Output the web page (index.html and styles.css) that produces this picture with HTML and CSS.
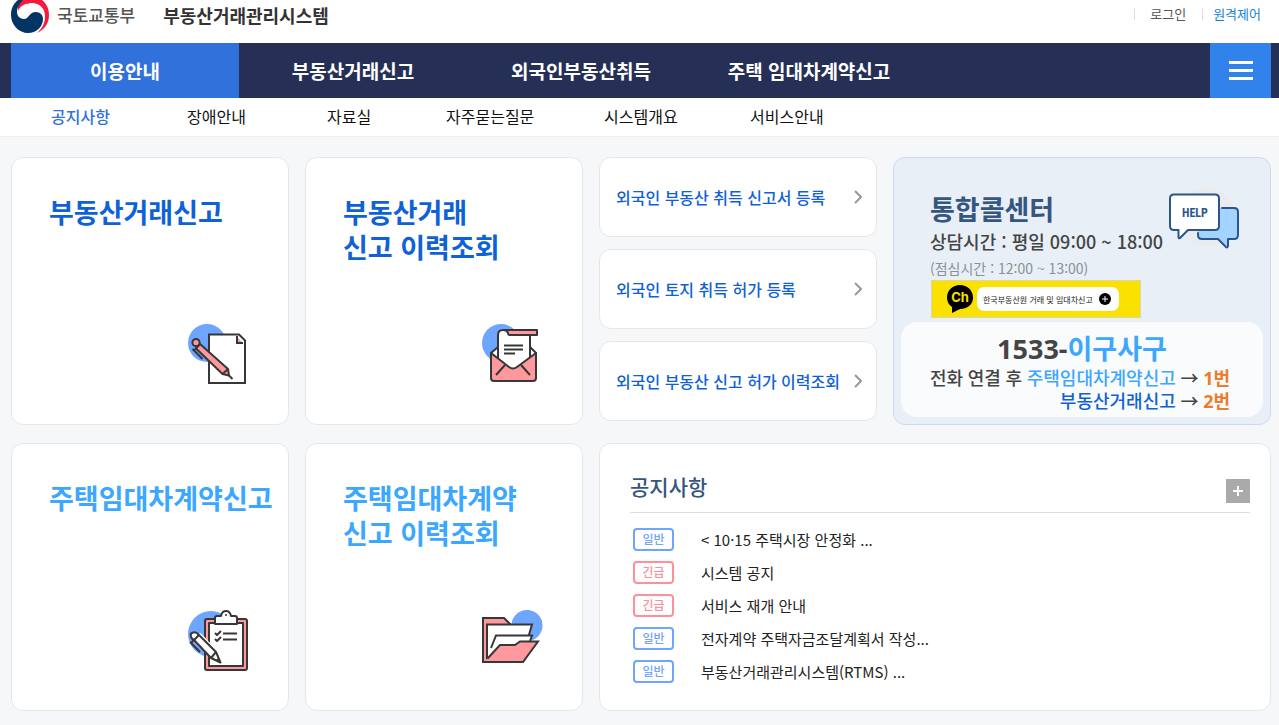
FILE: index.html
```html
<!DOCTYPE html>
<html lang="ko">
<head>
<meta charset="UTF-8">
<meta name="viewport" content="width=device-width, initial-scale=1">
<title>부동산거래관리시스템</title>
<link rel="stylesheet" href="styles.css">
</head>
<body>

<header class="top">
  <a class="logo" href="#">
    <svg class="logo-mark" viewBox="0 0 38 34" aria-hidden="true">
      <path fill="#f51b3c" d="M7 0H31C36 4 38 9 38 15C38 23 34 29 26 33C32 28 34 22 34 16C34 8 28 3 21 3C14 3 9 6 7 11Z"/>
      <path fill="#023562" d="M7 0C2 4 0 9 0 15C0 25 8 33 17 33C25 33 32 27 32 19C32 15 29 12 25 12C18 12 18 19 13 19C9 19 6 16 6 12C6 7 9 3 13 0Z"/>
      <path fill="#f51b3c" d="M12 0H29L21 3C15 3 10 5 7 9C8 5 10 2 12 0Z"/>
    </svg>
    <span class="ministry">국토교통부</span>
    <span class="system">부동산거래관리시스템</span>
  </a>
  <div class="util">
    <a href="#">로그인</a>
    <a class="remote" href="#">원격제어</a>
  </div>
</header>

<nav class="gnb">
  <a class="on" href="#">이용안내</a>
  <a href="#">부동산거래신고</a>
  <a href="#">외국인부동산취득</a>
  <a href="#">주택 임대차계약신고</a>
  <button class="all-menu" type="button" aria-label="전체메뉴"><span></span><span></span><span></span></button>
</nav>

<nav class="lnb">
  <a class="on" href="#">공지사항</a>
  <a href="#">장애안내</a>
  <a href="#">자료실</a>
  <a href="#">자주묻는질문</a>
  <a href="#">시스템개요</a>
  <a href="#">서비스안내</a>
</nav>

<main class="main">
  <a class="card menu" href="#">
    <strong>부동산거래신고</strong>
    <svg viewBox="0 0 62 62" aria-hidden="true">
      <circle cx="20" cy="20" r="19" fill="#6ea5ff"/>
      <path d="M22 11.500H52L58 17.500V60H22Z" fill="#fff" stroke="#373737" stroke-width="2"/>
      <path d="M50 14V20H56Z" fill="#ff999e"/>
      <path d="M50 13V20H56" fill="none" stroke="#373737" stroke-width="2"/>
      <g fill="#ff999e" stroke="#373737" stroke-width="2" stroke-linejoin="round">
        <path d="M9 25.500L35.500 51L42 52.500L41 46L13 21Z"/>
        <path d="M35.500 51L41 46M42 52.500L45.500 56"/>
        <circle cx="9" cy="19.500" r="3.600"/>
        <path fill="none" d="M5.500 26L15.500 36M6.500 28L9.500 25"/>
      </g>
    </svg>
  </a>
  <a class="card menu" href="#">
    <strong>부동산거래<br>신고 이력조회</strong>
    <svg viewBox="0 0 62 62" aria-hidden="true">
      <circle cx="20" cy="20" r="19" fill="#6ea5ff"/>
      <g stroke="#373737" stroke-width="2" stroke-linejoin="round">
        <path d="M10 30L17 24H49L55 30V40H10Z" fill="#fff"/>
        <path d="M17 48V12Q17 7 22 7H49V48Z" fill="#fff"/>
        <path d="M22 7H56V12H29Q27 12 27 10Q26 7 22 7Z" fill="#ff999e"/>
        <path d="M49 12V36" fill="none"/>
        <path d="M10 30L28 44Q32 47 36 44L55 30V55Q55 58 52 58H13Q10 58 10 55Z" fill="#ff999e"/>
        <path d="M24 42L15 52M40 42L49 52M23 22.500H42M23 26.500H42M23 30.500H34" fill="none"/>
      </g>
    </svg>
  </a>

  <div class="links">
    <a class="card" href="#">외국인 부동산 취득 신고서 등록<svg viewBox="0 0 8 14" aria-hidden="true"><path d="M1 1L7 7L1 13"/></svg></a>
    <a class="card" href="#">외국인 토지 취득 허가 등록<svg viewBox="0 0 8 14" aria-hidden="true"><path d="M1 1L7 7L1 13"/></svg></a>
    <a class="card" href="#">외국인 부동산 신고 허가 이력조회<svg viewBox="0 0 8 14" aria-hidden="true"><path d="M1 1L7 7L1 13"/></svg></a>
  </div>

  <section class="card call">
    <div class="call-head">
      <div>
        <h2>통합콜센터</h2>
        <p class="hours">상담시간 : 평일 09:00 ~ 18:00</p>
        <p class="lunch">(점심시간 : 12:00 ~ 13:00)</p>
      </div>
      <svg class="help" viewBox="0 0 72 64" aria-hidden="true">
        <circle cx="38" cy="30" r="29" fill="#e9ebee"/>
        <g stroke="#2b568c" stroke-width="2" stroke-linejoin="round">
          <path d="M33 21H67Q70 21 70 24V49Q70 52 67 52H60V60.500Q58 61 57 59L50 52H33Q30 52 30 49V24Z" fill="#a3d3ff" stroke="none"/>
          <path d="M54 21H66Q70 21 70 25V48Q70 52 66 52H60V59Q59 62 57 59L50 52H34Q30 52 30 48V46" fill="none" stroke-linecap="round"/>
          <path d="M6 7.500H47Q51 7.500 51 11.500V39Q51 43 47 43H20L12 51Q10.500 52 10.500 50V43H6Q2 43 2 39V11.500Q2 7.500 6 7.500Z" fill="#fff"/>
        </g>
        <text x="27" y="30" text-anchor="middle">HELP</text>
      </svg>
    </div>
    <a class="kakao" href="#">
      <svg class="ch" viewBox="0 0 26 28" aria-hidden="true">
        <path d="M13 0C20 0 26 5 26 12.500C26 20 20 24 13 24L5 28V22C2 20 0 17 0 12.500C0 5 6 0 13 0Z"/>
        <text x="13" y="17" text-anchor="middle">Ch</text>
      </svg>
      <span class="kakao-name">한국부동산원 거래 및 임대차신고
        <svg class="plus" viewBox="0 0 12 12" aria-hidden="true"><circle cx="6" cy="6" r="6"/><path d="M3 6H9M6 3V9" stroke="#fff"/></svg>
      </span>
    </a>
    <div class="tel">
      <p class="number">1533-<span class="sky">이구사구</span></p>
      <p>전화 연결 후 <span class="sky">주택임대차계약신고</span> → <b>1번</b></p>
      <p><span class="blue">부동산거래신고</span> → <b>2번</b></p>
    </div>
  </section>

  <a class="card menu lease" href="#">
    <strong>주택임대차계약신고</strong>
    <svg viewBox="0 0 62 62" aria-hidden="true">
      <circle cx="24" cy="25" r="23" fill="#6ea5ff"/>
      <g stroke="#373737" stroke-width="2" stroke-linejoin="round">
        <rect x="18" y="10" width="42" height="51" rx="2" fill="#ff999e"/>
        <path d="M22 14H56V57H22Z" fill="#fff"/>
        <path d="M28 15V9Q28 7 30 7H34Q35 2 39 2Q43 2 44 7H48Q50 7 50 9V15Z" fill="#fff"/>
        <circle cx="39" cy="6" r="1" fill="#373737" stroke="none"/>
        <path d="M36 24.500H50M36 30.500H50M28 24L30 26L34 22M28 30L30 32L34 28" fill="none"/>
        <path d="M9 31L27 49L33 53L30 45L13 27Z" fill="#fff" stroke="#fff" stroke-width="5"/>
        <path d="M4 28Q3 25 5 24Q8 22 11 25L29 43L33.500 53.500L24 49L7 31Q5 30 4 28Z" fill="#fff"/>
        <path d="M7 31L12 26M24 49L29 43M3 33L13 43M4 34L7 31M30 50L33 53" fill="none"/>
      </g>
    </svg>
  </a>
  <a class="card menu lease" href="#">
    <strong>주택임대차계약<br>신고 이력조회</strong>
    <svg viewBox="0 0 62 62" aria-hidden="true">
      <circle cx="46" cy="16.500" r="15.500" fill="#6ea5ff"/>
      <g stroke="#373737" stroke-width="2">
        <path d="M2 9H23L29 15V53H2Z" fill="#ff999e"/>
        <path d="M6 15.500H51L45 36L6 50Z" fill="#fff"/>
        <path d="M10 39L15 26.500H51L47 36L19 40Z" fill="#fff" stroke="none"/>
        <path d="M10 39L15 26.500H51L49 32" fill="none"/>
        <path d="M6.500 49.500L19 36H34L39 32.500H57L42 53H2" fill="#ff999e"/>
      </g>
    </svg>
  </a>

  <section class="card notice">
    <div class="notice-head">
      <h2>공지사항</h2>
      <a class="more" href="#" aria-label="더보기"><svg viewBox="0 0 24 24" aria-hidden="true"><path d="M7 12H17M12 7V17"/></svg></a>
    </div>
    <ul>
      <li><span class="tag">일반</span><a href="#">&lt; 10·15 주택시장 안정화 ...</a></li>
      <li><span class="tag urgent">긴급</span><a href="#">시스템 공지</a></li>
      <li><span class="tag urgent">긴급</span><a href="#">서비스 재개 안내</a></li>
      <li><span class="tag">일반</span><a href="#">전자계약 주택자금조달계획서 작성...</a></li>
      <li><span class="tag">일반</span><a href="#">부동산거래관리시스템(RTMS) ...</a></li>
    </ul>
  </section>
</main>

</body>
</html>
```
FILE: styles.css
```css
*{box-sizing:border-box}
html,body{margin:0}
body{background:#f5f7f9;color:#222;font-family:"Noto Sans CJK KR","Noto Sans",sans-serif;font-size:15px}
h2,p,ul{margin:0;padding:0}
ul{list-style:none}
a{color:inherit;text-decoration:none}
svg{display:block}

.top{display:flex;justify-content:space-between;align-items:flex-start;height:43px;padding:0 18px 0 11px;background:#fff}
.logo{display:flex;line-height:30px}
.logo-mark{width:38px;height:34px;margin-right:8px}
.ministry{margin-right:28px;color:#555;font-size:17px;font-weight:500}
.system{color:#333;font-size:18px;font-weight:700}
.util{display:flex;gap:16px;padding-top:8px;color:#555;font-size:13px;line-height:12px}
.util a{border-left:1px solid #ddd;padding-left:15px}
.util .remote{color:#1482d6;padding-left:10px}

.gnb{display:flex;height:55px;padding:0 8px 0 11px;background:#262f55;color:#fff;font-size:19px;font-weight:700;line-height:55px;text-align:center}
.gnb a{width:228px}
.gnb .on{background:#3071db}
.all-menu{display:flex;flex-direction:column;align-items:center;justify-content:center;gap:5px;width:61px;margin-left:auto;padding:0;border:0;background:#3282eb}
.all-menu span{width:24px;height:3px;background:#fff}

.lnb{display:grid;grid-template-columns:136px 140px 119px 158px 146px auto;height:39px;padding-left:51px;border-bottom:1px solid #eee;background:#fff;color:#111;font-size:16px;line-height:37px}
.lnb .on{color:#3071db;font-weight:500}

.main{display:grid;grid-template-columns:minmax(0,278fr) minmax(0,278fr) minmax(0,278fr) minmax(0,378fr);gap:18px 16px;padding:20px 8px 14px 11px}
.card{border:1px solid #e5e8ea;border-radius:12px;background:#fff}

.menu{display:flex;flex-direction:column;justify-content:space-between;min-height:268px;padding:36px 0 39px 37px;color:#0f62d6;font-size:27px;line-height:35px}
.menu strong{font-weight:700;white-space:nowrap}
.menu svg{width:62px;height:62px;margin:0 39px 0 auto}
.lease{color:#3ba7ff}

.links{display:flex;flex-direction:column;gap:12px}
.links a{display:flex;align-items:center;justify-content:space-between;height:80px;padding:0 14px 0 16px;color:#0f62d6;font-size:16px;font-weight:500;white-space:nowrap}
.links svg{width:8px;height:14px;fill:none;stroke:#999;stroke-width:2}

.call{display:flex;flex-direction:column;padding:28px 7px 7px;border-color:#cbdbed;background:#e8eff7}
.call-head{display:flex;justify-content:space-between;padding:0 23px 0 29px;white-space:nowrap}
.call h2{color:#34567f;font-size:27px;line-height:45px}
.hours{color:#444;font-size:18px;font-weight:500;line-height:20px}
.lunch{color:#8b9095;font-size:14px;line-height:34px}
.help{flex:none;width:72px;height:64px;margin-top:1px}
.help text{fill:#2b568c;font:bold 12px "Roboto Condensed",Roboto,sans-serif}
.kakao{display:flex;align-items:center;gap:4px;width:210px;height:38px;margin:-5px 0 4px 30px;padding-left:15px;border:1px solid #d9d6b0;background:#fae100}
.ch{width:26px;height:28px}
.ch text{fill:#fae100;font:bold 13px Inter,sans-serif}
.kakao-name{display:flex;align-items:center;gap:6px;height:24px;padding:0 8px 0 6px;border-radius:7px;background:#fff;color:#222;font-size:8px;white-space:nowrap}
.plus{width:12px;height:12px}
.tel{flex:1;padding:8px 33px 0 0;border-radius:16px;background:#f9fbfd;color:#444;font-family:"Noto Sans","Noto Sans CJK KR",sans-serif;font-size:18px;font-weight:500;line-height:23px;text-align:right;white-space:nowrap}
.tel .number{padding-left:33px;font-size:27px;font-weight:700;line-height:37px;text-align:center}
.tel b{color:#ee7b2c}
.sky{color:#3ba7ff}
.blue{color:#0f62d6}

.notice{grid-column:3 / 5;padding:25px 20px 0 30px}
.notice-head{display:flex;align-items:flex-start;justify-content:space-between;height:44px;border-bottom:1px solid #ddd}
.notice h2{color:#34567f;font-size:21px;font-weight:500;line-height:34px}
.more{padding-top:10px}
.more svg{width:24px;height:24px;background:#aaa;stroke:#fff;stroke-width:2}
.notice ul{padding:10px 0 0 3px}
.notice li{display:flex;align-items:center;gap:27px;height:33px}
.tag{width:41px;height:23px;border:2px solid #6ea5ff;border-radius:4px;color:#6ea5ff;font-size:12px;font-weight:500;line-height:18px;text-align:center}
.urgent{border-color:#ff8f98;color:#ff8f98}
```
